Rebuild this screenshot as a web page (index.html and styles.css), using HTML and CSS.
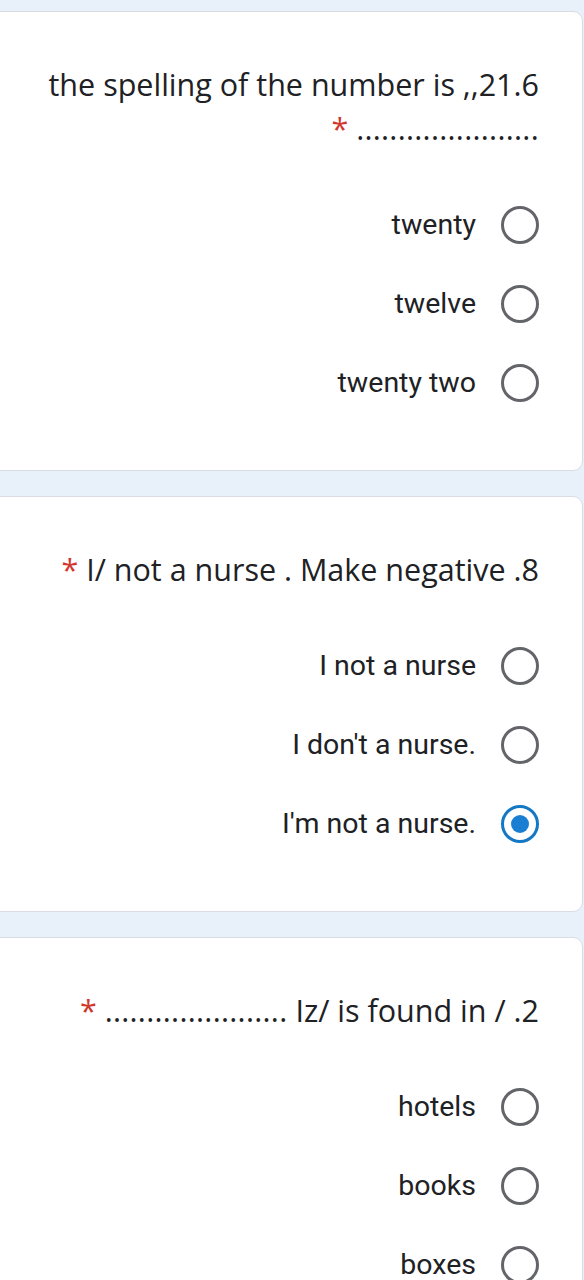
FILE: index.html
```html
<!DOCTYPE html>
<html lang="en">
<head>
<meta charset="utf-8">
<title>Form</title>
<link rel="stylesheet" href="styles.css">
</head>
<body>
<div class="page">

  <section class="card">
    <div class="question">
      <div class="q-line">the spelling of the number is ,,21.6</div>
      <div class="q-line"><span class="req">*</span> <span class="dots">......................</span></div>
    </div>
    <ul class="options">
      <li class="option"><span class="label">twenty</span><span class="radio"></span></li>
      <li class="option"><span class="label">twelve</span><span class="radio"></span></li>
      <li class="option"><span class="label">twenty two</span><span class="radio"></span></li>
    </ul>
  </section>

  <section class="card">
    <div class="question">
      <div class="q-line"><span class="req">*</span> I/ not a nurse . Make negative .8</div>
    </div>
    <ul class="options">
      <li class="option"><span class="label">I not a nurse</span><span class="radio"></span></li>
      <li class="option"><span class="label">I don't a nurse.</span><span class="radio"></span></li>
      <li class="option"><span class="label">I'm not a nurse.</span><span class="radio checked"></span></li>
    </ul>
  </section>

  <section class="card">
    <div class="question">
      <div class="q-line"><span class="req">*</span> <span class="dots">......................</span> Iz/ is found in / .2</div>
    </div>
    <ul class="options">
      <li class="option"><span class="label">hotels</span><span class="radio"></span></li>
      <li class="option"><span class="label">books</span><span class="radio"></span></li>
      <li class="option"><span class="label">boxes</span><span class="radio"></span></li>
    </ul>
  </section>

</div>
</body>
</html>
```

FILE: styles.css
```css
html, body {
  margin: 0;
  padding: 0;
}

body {
  background: #e8f1fa;
  overflow: hidden;
  height: 1280px;
}

.page {
  display: flex;
  flex-direction: column;
  gap: 25px;
  padding-top: 11px;
}

.card {
  background: #ffffff;
  border: 1px solid #d9dde3;
  border-radius: 10px;
  margin-left: -20px;
  margin-right: 1px;
  padding: 50px 43px 48px 20px;
}

.question {
  display: flex;
  flex-direction: column;
  align-items: flex-end;
  font-family: "Open Sans", "Liberation Sans", sans-serif;
  font-size: 30.5px;
  line-height: 44px;
  color: #202124;
}

.q-line {
  white-space: nowrap;
  text-align: right;
}

.req {
  color: #d0372e;
}

.dots {
  letter-spacing: 0.3px;
}

.options {
  list-style: none;
  margin: 35px 0 0 0;
  padding: 0;
  display: flex;
  flex-direction: column;
}

.option {
  height: 79px;
  display: flex;
  align-items: center;
  justify-content: flex-end;
  gap: 25px;
  font-family: Roboto, "Liberation Sans", sans-serif;
  font-size: 28.5px;
  color: #202124;
}

.radio {
  width: 38px;
  height: 38px;
  box-sizing: border-box;
  border: 3px solid #636569;
  border-radius: 50%;
  display: flex;
  align-items: center;
  justify-content: center;
  flex: none;
}

.radio.checked {
  border-color: #1578c4;
}

.radio.checked::after {
  content: "";
  width: 18px;
  height: 18px;
  border-radius: 50%;
  background: #1a7fd3;
}
```
